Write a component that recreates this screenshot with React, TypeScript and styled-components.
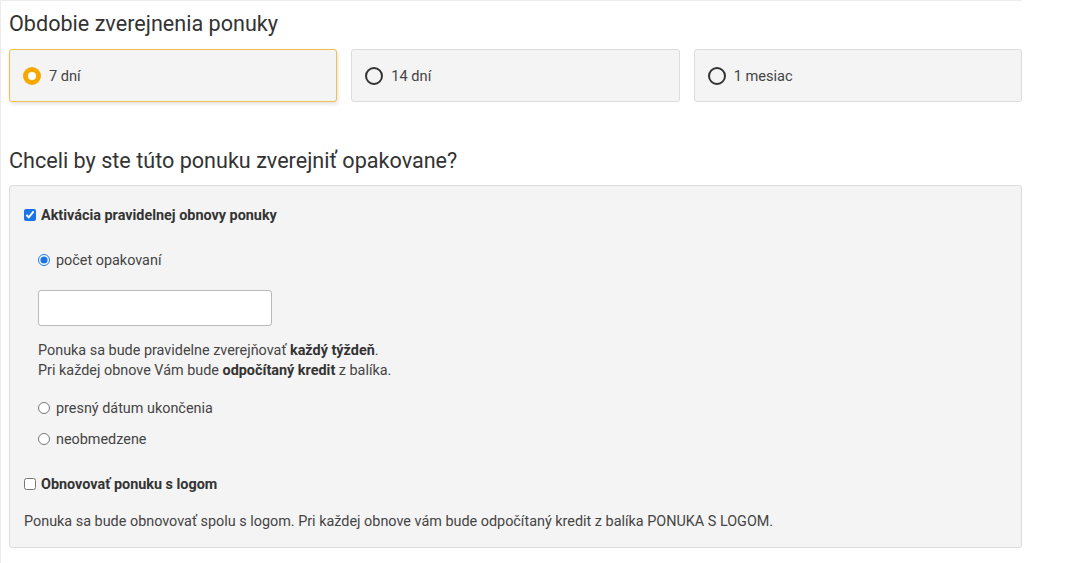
import React, { useState } from 'react';
import styled, { createGlobalStyle } from 'styled-components';

const GlobalStyle = createGlobalStyle`
    html, body {
        margin: 0;
        padding: 0;
        background: #fff;
    }
    body {
        font-family: Roboto, "Liberation Sans", Arial, sans-serif;
        color: #333;
    }
`;

const Page = styled.div`
    min-height: 100vh;
    box-sizing: border-box;
    border-top: 1px solid #ececec;
    border-left: 1px solid #ececec;
    padding: 9px 0 0 8px;
    width: 1022px;
`;

const Heading = styled.h2<{ $top?: number }>`
    margin: ${props => props.$top || 0}px 0 0;
    font-size: 21.6px;
    line-height: 28px;
    font-weight: 400;
    color: #333;
`;

const OptionRow = styled.div`
    display: grid;
    grid-template-columns: repeat(3, 1fr);
    gap: 14px;
    margin-top: 11px;
`;

interface OptionCardProps {
    $active?: boolean;
}

const OptionCard = styled.label<OptionCardProps>`
    display: flex;
    align-items: center;
    gap: 8px;
    height: 53px;
    box-sizing: border-box;
    padding: 0 13px;
    background: #f4f4f4;
    border: 1px solid ${props => props.$active ? '#f3be4d' : '#dcdcdc'};
    border-radius: 3px;
    box-shadow: ${props => props.$active ? '1px 2px 4px rgba(0,0,0,0.12)' : 'none'};
    font-size: 14.6px;
    color: #444;
    cursor: pointer;
`;

const BigRadio = styled.span<OptionCardProps>`
    width: 18px;
    height: 18px;
    box-sizing: border-box;
    border-radius: 50%;
    flex-shrink: 0;
    border: ${props => props.$active ? '5px solid #f5a900' : '2px solid #333'};
    background: ${props => props.$active ? '#fff' : 'transparent'};
`;

const Panel = styled.div`
    margin-top: 10px;
    background: #f4f4f4;
    border: 1px solid #dcdcdc;
    border-radius: 3px;
    padding: 19px 14px 15px;
    display: flex;
    flex-direction: column;
`;

const CheckRow = styled.label<{ $top?: number }>`
    display: flex;
    align-items: center;
    gap: 5px;
    height: 20px;
    margin-top: ${props => props.$top || 0}px;
    font-size: 14.4px;
    font-weight: 700;
    color: #333;
`;

const Check = styled.input.attrs({ type: 'checkbox' })`
    margin: 0;
    width: 12px;
    height: 12px;
    accent-color: #1a73e8;
`;

const Sub = styled.div`
    display: flex;
    flex-direction: column;
    padding-left: 14px;
`;

const RadioRow = styled.label<{ $top?: number }>`
    display: flex;
    align-items: center;
    gap: 6px;
    height: 20px;
    margin-top: ${props => props.$top || 0}px;
    font-size: 14.4px;
    color: #444;
`;

const Radio = styled.input.attrs({ type: 'radio' })`
    margin: 0;
    width: 12px;
    height: 12px;
    accent-color: #1a73e8;
`;

const TextInput = styled.input`
    margin-top: 20px;
    width: 234px;
    height: 36px;
    box-sizing: border-box;
    border: 1px solid #b9b9b9;
    border-radius: 3px;
    background: #fff;
    padding: 0 8px;
    font: inherit;
`;

const Note = styled.p<{ $top?: number }>`
    margin: ${props => props.$top || 0}px 0 0;
    font-size: 14.4px;
    line-height: 20px;
    color: #444;

    b {
        color: #333;
    }
`;

const periods = ['7 dní', '14 dní', '1 mesiac'];

export default function App() {
    const [period, setPeriod] = useState(0);
    const [mode, setMode] = useState('count');
    const [renew, setRenew] = useState(true);
    const [logo, setLogo] = useState(false);

    return (
        <Page>
            <GlobalStyle />
            <Heading>Obdobie zverejnenia ponuky</Heading>
            <OptionRow>
                {periods.map((p, i) => (
                    <OptionCard key={p} $active={period === i} onClick={() => setPeriod(i)}>
                        <BigRadio $active={period === i} />
                        {p}
                    </OptionCard>
                ))}
            </OptionRow>

            <Heading $top={45}>Chceli by ste túto ponuku zverejniť opakovane?</Heading>
            <Panel>
                <CheckRow>
                    <Check checked={renew} onChange={() => setRenew(!renew)} />
                    Aktivácia pravidelnej obnovy ponuky
                </CheckRow>
                <Sub>
                    <RadioRow $top={25}>
                        <Radio name="mode" checked={mode === 'count'} onChange={() => setMode('count')} />
                        počet opakovaní
                    </RadioRow>
                    <TextInput type="text" />
                    <Note $top={15}>
                        Ponuka sa bude pravidelne zverejňovať <b>každý týždeň</b>.<br />
                        Pri každej obnove Vám bude <b>odpočítaný kredit</b> z balíka.
                    </Note>
                    <RadioRow $top={17}>
                        <Radio name="mode" checked={mode === 'date'} onChange={() => setMode('date')} />
                        presný dátum ukončenia
                    </RadioRow>
                    <RadioRow $top={11}>
                        <Radio name="mode" checked={mode === 'none'} onChange={() => setMode('none')} />
                        neobmedzene
                    </RadioRow>
                </Sub>
                <CheckRow $top={25}>
                    <Check checked={logo} onChange={() => setLogo(!logo)} />
                    Obnovovať ponuku s logom
                </CheckRow>
                <Note $top={18}>
                    Ponuka sa bude obnovovať spolu s logom. Pri každej obnove vám bude odpočítaný kredit z balíka PONUKA S LOGOM.
                </Note>
            </Panel>
        </Page>
    );
}
